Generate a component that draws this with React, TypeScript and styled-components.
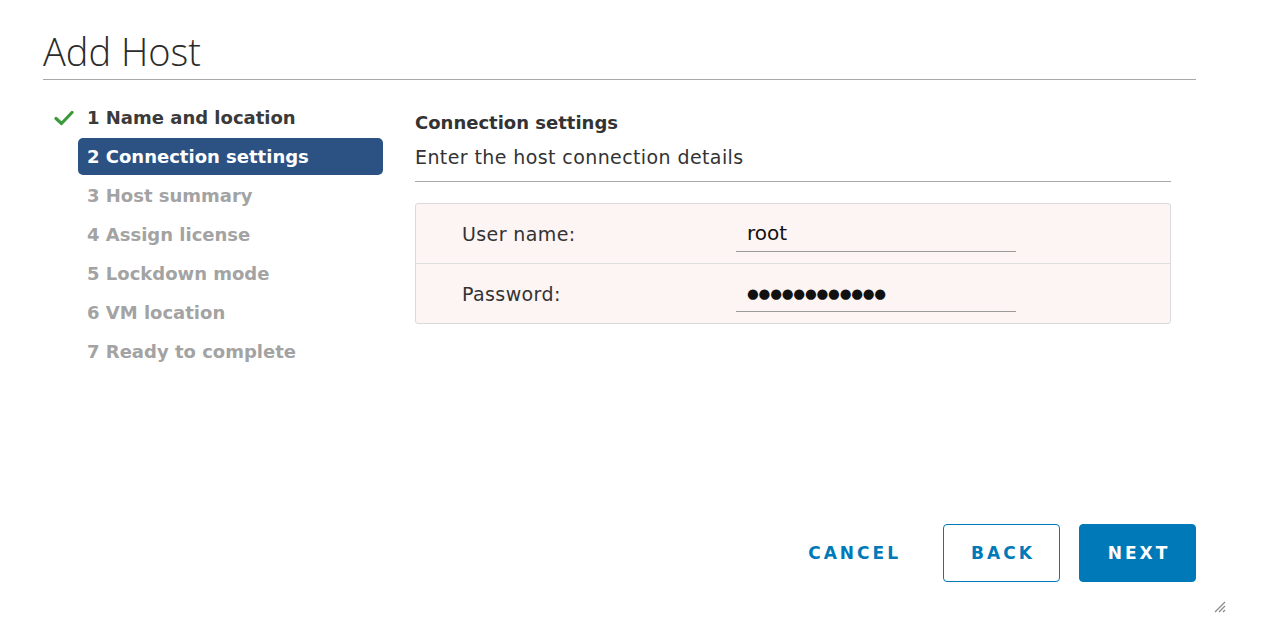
import React from "react";
import styled, { createGlobalStyle } from "styled-components";

const Global = createGlobalStyle`
  html, body { margin: 0; padding: 0; background: #ffffff; }
  body { font-family: "DejaVu Sans", "Liberation Sans", sans-serif; color: #313131; }
  * { box-sizing: border-box; }
`;

const Dialog = styled.div`
  width: 1280px;
  height: 624px;
  padding: 25px 84px 0 43px;
  display: flex;
  flex-direction: column;
  position: relative;
`;

const Title = styled.h1`
  margin: 0;
  font-family: "Open Sans", "Liberation Sans", sans-serif;
  font-size: 38px;
  font-weight: 300;
  color: #2b2b2b;
  line-height: 52px;
  padding-bottom: 2px;
  border-bottom: 1px solid #a8a8a8;
`;

const Body = styled.div`
  display: flex;
  flex: 1;
  padding-top: 19px;
`;

const Nav = styled.ol`
  list-style: none;
  margin: 0;
  padding: 0 0 0 35px;
  width: 372px;
  display: flex;
  flex-direction: column;
`;

const Step = styled.li<{ $state: "done" | "active" | "todo" }>`
  position: relative;
  height: 37px;
  margin-bottom: 2px;
  padding-left: 9px;
  display: flex;
  align-items: center;
  border-radius: 5px;
  width: 305px;
  font-size: 18px;
  font-weight: 700;
  background: ${(p) => (p.$state === "active" ? "#2c5283" : "transparent")};
  color: ${(p) =>
    p.$state === "active" ? "#ffffff" : p.$state === "done" ? "#3a3a3a" : "#a3a3a3"};
`;

const Check = styled.svg`
  position: absolute;
  left: -24px;
  top: 11px;
`;

const Content = styled.div`
  width: 756px;
  padding-top: 12px;
  display: flex;
  flex-direction: column;
`;

const SectionTitle = styled.div`
  font-size: 18px;
  font-weight: 700;
  color: #333;
  line-height: 24px;
`;

const SectionSub = styled.div`
  font-size: 19px;
  letter-spacing: 0.4px;
  color: #333;
  line-height: 24px;
  margin-top: 10px;
  padding-bottom: 12px;
  border-bottom: 1px solid #a8a8a8;
`;

const FormBox = styled.div`
  margin-top: 21px;
  border: 1px solid #dadada;
  border-radius: 3px;
  background: #fdf4f4;
`;

const FormRow = styled.div`
  height: 59px;
  display: flex;
  align-items: center;
  padding-left: 46px;
  & + & {
    border-top: 1px solid #dedede;
    height: 60px;
  }
`;

const Label = styled.div`
  width: 274px;
  font-size: 19px;
  letter-spacing: 0.4px;
  color: #333;
`;

const Input = styled.div<{ $secret?: boolean }>`
  width: 280px;
  height: 30px;
  margin-top: 6px;
  padding-left: 11px;
  border-bottom: 1px solid #9a9a9a;
  font-size: ${(p) => (p.$secret ? "13.5px" : "20px")};
  letter-spacing: ${(p) => (p.$secret ? "-0.2px" : "0")};
  color: #111;
  line-height: 22px;
`;

const Footer = styled.div`
  display: flex;
  justify-content: flex-end;
  align-items: center;
  gap: 19px;
  margin-bottom: 42px;
`;

const Button = styled.button<{ $kind: "flat" | "outline" | "solid" }>`
  height: 58px;
  width: ${(p) => (p.$kind === "flat" ? "auto" : "117px")};
  padding: 0 ${(p) => (p.$kind === "flat" ? "22px" : "0")};
  font-family: "DejaVu Sans", sans-serif;
  font-size: 17px;
  font-weight: 700;
  letter-spacing: 3px;
  text-indent: 3px;
  border-radius: 4px;
  cursor: pointer;
  border: 1px solid ${(p) => (p.$kind === "flat" ? "transparent" : "#0079b8")};
  background: ${(p) => (p.$kind === "solid" ? "#0079b8" : "transparent")};
  color: ${(p) => (p.$kind === "solid" ? "#ffffff" : "#0079b8")};
`;

const Grip = styled.svg`
  position: absolute;
  left: 1214px;
  top: 601px;
`;

const steps: { label: string; state: "done" | "active" | "todo" }[] = [
  { label: "1 Name and location", state: "done" },
  { label: "2 Connection settings", state: "active" },
  { label: "3 Host summary", state: "todo" },
  { label: "4 Assign license", state: "todo" },
  { label: "5 Lockdown mode", state: "todo" },
  { label: "6 VM location", state: "todo" },
  { label: "7 Ready to complete", state: "todo" },
];

export default function App() {
  return (
    <>
      <Global />
      <Dialog>
        <Title>Add Host</Title>
        <Body>
          <Nav>
            {steps.map((s) => (
              <Step key={s.label} $state={s.state}>
                {s.state === "done" && (
                  <Check width="20" height="16" viewBox="0 0 20 16">
                    <path d="M2 8.5 L7.5 13.5 L18 2.5" fill="none" stroke="#3c9a3c" strokeWidth="3.2" strokeLinecap="round" strokeLinejoin="round" />
                  </Check>
                )}
                {s.label}
              </Step>
            ))}
          </Nav>
          <Content>
            <SectionTitle>Connection settings</SectionTitle>
            <SectionSub>Enter the host connection details</SectionSub>
            <FormBox>
              <FormRow>
                <Label>User name:</Label>
                <Input>root</Input>
              </FormRow>
              <FormRow>
                <Label>Password:</Label>
                <Input $secret>●●●●●●●●●●●●</Input>
              </FormRow>
            </FormBox>
          </Content>
        </Body>
        <Footer>
          <Button $kind="flat">CANCEL</Button>
          <Button $kind="outline">BACK</Button>
          <Button $kind="solid">NEXT</Button>
        </Footer>
        <Grip width="12" height="12" viewBox="0 0 12 12">
          <path d="M11 1 L1 11 M11 5 L5 11 M11 9 L9 11" stroke="#888" strokeWidth="1.2" />
        </Grip>
      </Dialog>
    </>
  );
}
